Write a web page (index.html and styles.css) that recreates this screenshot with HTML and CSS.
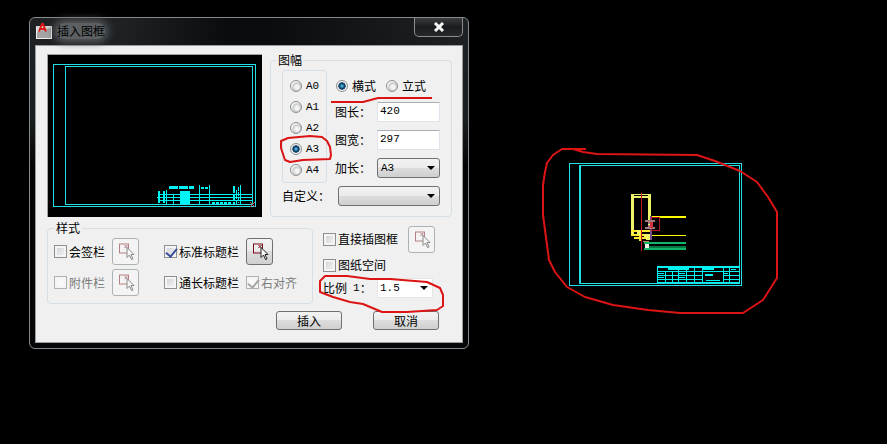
FILE: index.html
```html
<!DOCTYPE html>
<html lang="zh-CN">
<head>
    <meta charset="UTF-8">
    <meta name="viewport" content="width=device-width, initial-scale=1.0">
    <title>插入图框</title>
    <link rel="stylesheet" href="styles.css">
</head>
<body>
    <svg class="symbols" aria-hidden="true">
        <symbol id="pick" viewBox="0 0 25 25">
            <rect x="6.500" y="5" width="9" height="9" fill="none" stroke="#7a0f18"/>
            <path d="M11.500 6l3 3M14.500 6l-3 3" stroke="#7a0f18" fill="none"/>
            <path d="M14 8.500v10l2.500-2.500 2 4.500 1.500-.5-2-4.500h3z" fill="#fff" stroke="#222"/>
        </symbol>
    </svg>

    <main class="canvas">
        <!-- Drawing with the frame already inserted -->
        <svg class="drawing" viewBox="565 160 182 130" shape-rendering="crispEdges" role="img" aria-label="图框">
            <g fill="none" stroke="#22dfe6">
                <rect x="569.5" y="163.500" width="172" height="122"/>
                <path d="M580 165.500h159.500v118H580" />
                <path d="M580 165v119" stroke-width="2"/>
            </g>
            <g fill="none" stroke="#eef36a">
                <path d="M631 194.500h20" />
                <path d="M632.500 194v41M649.500 194v35" stroke-width="3"/>
                <path d="M631 197h20" stroke-width="2"/>
                <path d="M631 230.500h19M631 235h14M634 238h16M640 231v10" stroke="#ffe92e" stroke-width="2"/>
                <path d="M638.500 230v5" stroke-width="3"/>
                <path d="M644 235h7M646 238h5" stroke-width="3"/>
                <path d="M651 217h35" stroke="#ffff00" stroke-width="2"/>
                <path d="M651 235.500h35" stroke="#ffff00"/>
            </g>
            <path d="M644 243h42M644 249h42" stroke="#12b56c" stroke-width="2" fill="none"/>
            <path d="M648 247h38" stroke="#067a45" stroke-width="2" fill="none"/>
            <rect x="645" y="244" width="4" height="4" fill="#f4f4e8"/>
            <path d="M643 241.500h6" stroke="#c98858" fill="none"/>
            <path d="M651 216v24" stroke="#75508a" stroke-width="2" fill="none"/>
            <rect x="651.500" y="217.500" width="8" height="13" fill="none" stroke="#b51420"/>
            <path d="M645 221h10M645 228h10M648 223h5M648 226h5" stroke="#a77c7c" stroke-width="2" fill="none"/>
            <path d="M651 222v6" stroke="#cf3340" stroke-width="3" fill="none"/>
            <path d="M641.500 193v58" stroke="#c81822" fill="none"/>
            <g fill="none" stroke="#00f4f4">
                <path d="M657 267h83" stroke-width="2"/>
                <path d="M668 268.500h21M703 268.500h11" stroke-width="3"/>
                <path d="M657.500 266v18M665.500 272v12M672.500 272v12M678.500 270v14M686.500 270v14M694.500 267v17M702.500 267v17M723.500 267v17M729.500 267v17" />
                <path d="M657 271.500h82M657 275.500h45M657 279.500h45M723 275.500h16M723 279.500h16M706 280.500h14M731 269.500h5M657 282.500h82" />
                <path d="M705 275h8" stroke-width="2"/>
                <path d="M658 273.500h6M679 273.500h6M658 277.500h6M679 277.500h6M724 273.500h4" />
            </g>
        </svg>

        <section class="dialog" role="dialog" aria-labelledby="dialog-title">
            <header class="titlebar">
                <svg class="app-icon" viewBox="0 0 16 17" aria-hidden="true">
                    <rect x="0" y="3" width="16" height="13" fill="#d4d4d4"/>
                    <path d="M0 16V9l8-2 8-3v12z" fill="#a4a4a4"/>
                    <path d="M0 15.500h16M.5 4v12M15.500 4v12" stroke="#efefef" fill="none"/>
                    <path d="M3 8.500L6 1h1l3 7.500M4 6h5" stroke="#e01818" stroke-width="2" fill="none"/>
                </svg>
                <h1 id="dialog-title">插入图框</h1>
                <button type="button" class="close" aria-label="关闭">
                    <svg viewBox="0 0 12 10" aria-hidden="true">
                        <path d="M2 1l8 8M10 1L2 9" stroke="#f4f4f4" stroke-width="3" fill="none"/>
                    </svg>
                </button>
            </header>

            <form class="client">
                <div class="row-top">
                    <svg class="preview" viewBox="48 55 214 162" shape-rendering="crispEdges" role="img" aria-label="预览">
                        <g fill="none" stroke="#22dfe6">
                            <rect x="53.500" y="64.500" width="202" height="142"/>
                            <rect x="65.500" y="66.500" width="187" height="138"/>
                        </g>
                        <g fill="none" stroke="#00f4f4">
                            <path d="M159 194.500h93M157 197.500h95M159 200.500h93"/>
                            <path d="M158.500 191v12M159.500 191v12M163.500 191v12M164.500 191v12M166.500 190v14M173.500 194v10M199.500 185v19M209.500 185v19M240.500 185v19"/>
                            <path d="M169 187.500h25" stroke-width="3" stroke-dasharray="9 1"/>
                            <path d="M201 188h8M212 202.500h20" stroke-width="2" stroke-dasharray="3 1"/>
                            <path d="M234 186v18" stroke-width="2" stroke-dasharray="7 1"/>
                            <path d="M236.500 190v14M238.500 187v16" stroke-dasharray="4 1"/>
                        </g>
                        <rect x="180" y="191" width="10" height="13" fill="#00f4f4"/>
                        <path d="M250 202l5 5M255 202l-5 5" stroke="#c05050" fill="none"/>
                    </svg>

                    <fieldset class="paper">
                        <legend>图幅</legend>
                        <div class="paper-main">
                            <div class="sizes">
                                <label><input type="radio" name="size"><span class="latin">A0</span></label>
                                <label><input type="radio" name="size"><span class="latin">A1</span></label>
                                <label><input type="radio" name="size"><span class="latin">A2</span></label>
                                <label><input type="radio" name="size" checked><span class="latin">A3</span></label>
                                <label><input type="radio" name="size"><span class="latin">A4</span></label>
                            </div>
                            <div class="fields">
                                <div class="orientation">
                                    <label><input type="radio" name="orientation" checked>横式</label>
                                    <label><input type="radio" name="orientation">立式</label>
                                </div>
                                <div class="field">
                                    <label for="length">图长：</label>
                                    <input type="text" id="length" value="420">
                                </div>
                                <div class="field">
                                    <label for="width">图宽：</label>
                                    <input type="text" id="width" value="297">
                                </div>
                                <div class="field">
                                    <label for="extend">加长：</label>
                                    <div class="select"><select id="extend"><option>A3</option></select></div>
                                </div>
                            </div>
                        </div>
                        <div class="field custom">
                            <label for="custom">自定义：</label>
                            <div class="select"><select id="custom"><option></option></select></div>
                        </div>
                    </fieldset>
                </div>

                <div class="row-bottom">
                    <fieldset class="style">
                        <legend>样式</legend>
                        <div class="style-grid">
                            <label><input type="checkbox">会签栏</label>
                            <button type="button" class="pick" aria-label="拾取会签栏" disabled><svg><use href="#pick"/></svg></button>
                            <label><input type="checkbox" checked>标准标题栏</label>
                            <button type="button" class="pick" aria-label="拾取标题栏"><svg><use href="#pick"/></svg></button>
                            <label class="disabled"><input type="checkbox" disabled>附件栏</label>
                            <button type="button" class="pick" aria-label="拾取附件栏" disabled><svg><use href="#pick"/></svg></button>
                            <label><input type="checkbox">通长标题栏</label>
                            <label class="disabled"><input type="checkbox" checked disabled>右对齐</label>
                        </div>
                    </fieldset>

                    <div class="options">
                        <div class="option">
                            <label><input type="checkbox">直接插图框</label>
                            <button type="button" class="pick" aria-label="拾取图框" disabled><svg><use href="#pick"/></svg></button>
                        </div>
                        <div class="option">
                            <label><input type="checkbox">图纸空间</label>
                        </div>
                        <div class="option scale">
                            <label for="scale">比例 <span class="latin">1</span>：</label>
                            <div class="select plain"><select id="scale"><option>1.5</option></select></div>
                        </div>
                    </div>
                </div>

                <div class="actions">
                    <button type="submit">插入</button>
                    <button type="button">取消</button>
                </div>
            </form>
        </section>

        <!-- Red pen marks over the dialog and the drawing -->
        <svg class="marks" viewBox="0 0 887 444" aria-hidden="true">
            <path d="M331 102h32l15-4h54"/>
            <path d="M310 136L288 138 281 141 281 148 285 160 290 162 303 160 330 159 331 155 330 147 327 141 322 137z"/>
            <path d="M320 292V281L325 276H347L370 279H390L427 282 440 288 443 295V306L437 310 407 312H382L363 304 350 302 333 297z"/>
            <path d="M586 149H562L553 155 547 163 545 172 543 185V215L549 260 555 272 567 287 585 297 613 305 648 310 680 313H743L763 300 777 278V212L768 197 757 182 740 171 715 161 697 155 597 154 583 152 573 149"/>
        </svg>
    </main>
</body>
</html>
```

FILE: styles.css
```css
* {
    box-sizing: border-box;
}
body {
    margin: 0;
    background-color: #000;
    color: #000;
    font-family: "Noto Sans CJK SC", sans-serif;
    font-size: 12px;
    line-height: 16px;
}
button, input, select {
    margin: 0;
    font: inherit;
    color: inherit;
}
.symbols {
    display: none;
}
.canvas {
    position: relative;
    min-height: 100vh;
    overflow: hidden;
}
.drawing {
    position: absolute;
    left: 565px;
    top: 160px;
    width: 182px;
    height: 130px;
}
.marks {
    position: absolute;
    left: 0;
    top: 0;
    width: 887px;
    height: 444px;
    fill: none;
    stroke: #dc1414;
    stroke-width: 2;
    stroke-linejoin: round;
    pointer-events: none;
}

/* dialog window */
.dialog {
    position: absolute;
    left: 29px;
    top: 17px;
    width: 440px;
    padding: 0 5px 5px;
    border: 1px solid #858a8c;
    border-radius: 6px;
    background: linear-gradient(#1f2224, #1b1e20 30%, #030405 45%, #050607);
}
.titlebar {
    display: flex;
    align-items: flex-start;
    height: 27px;
    background: linear-gradient(90deg, transparent 20%, #0a0d0f 45%, #0a0d0f 55%, transparent);
}
.app-icon {
    width: 16px;
    height: 17px;
    margin: 5px 0 0 1px;
}
.titlebar h1 {
    margin: 5px 0 0 5px;
    font-size: 12px;
    font-weight: normal;
    line-height: 16px;
    background-color: #5c6063;
    border-radius: 8px;
    box-shadow: 0 0 8px 3px #5c6063;
}
.close {
    width: 49px;
    height: 19px;
    margin-left: auto;
    padding: 0;
    border: 1px solid #898d90;
    border-top: none;
    border-radius: 0 0 5px 5px;
    background: linear-gradient(#3a3d40, #191c1e 50%, #26292b);
}
.close svg {
    display: block;
    width: 12px;
    height: 10px;
    margin: 0 auto;
}
.client {
    padding: 6px 10px 12px 11px;
    border: 1px solid #9a9d9f;
    background-color: #f0f0f0;
}

/* groups */
fieldset {
    min-width: 0;
    margin: 0;
    border: 1px solid #d5dfe5;
    border-radius: 4px;
}
legend {
    margin: 0;
    padding: 0 2px;
}
.row-top {
    display: flex;
    gap: 8px;
}
.preview {
    width: 215px;
    height: 163px;
    margin-top: 2px;
    border: 1px solid #a0a0a0;
    border-width: 1px 0 0 1px;
    background-color: #000;
}
.paper {
    flex: 1;
    padding: 2px 11px 10px;
}
.paper legend {
    margin-left: -6px;
}
.paper-main {
    display: flex;
    align-items: flex-start;
    gap: 8px;
    margin-bottom: 3px;
}
label {
    display: flex;
    align-items: center;
    white-space: nowrap;
}
.latin {
    font-family: "Liberation Mono", monospace;
    font-size: 11px;
}
.sizes {
    width: 45px;
    padding: 4px 0 2px 7px;
    border: 1px solid #d5dfe5;
    border-radius: 3px;
}
.sizes label {
    height: 21px;
}
.fields {
    display: flex;
    flex: 1;
    flex-direction: column;
    gap: 8px;
    min-width: 0;
}
.orientation {
    display: flex;
    gap: 10px;
    height: 24px;
    padding: 8px 0 0 1px;
}
.field {
    display: flex;
    align-items: center;
    height: 20px;
}
.field label {
    width: 42px;
}
.field.custom label {
    width: 56px;
}
input[type="text"] {
    flex: 1;
    min-width: 0;
    height: 20px;
    padding: 0 2px 2px;
    border: 1px solid #e2e3ea;
    border-top-color: #abadb3;
    background-color: #fff;
    font-family: "Liberation Mono", monospace;
    font-size: 11px;
}

/* drop-downs */
.select {
    position: relative;
    flex: 1;
}
.select::after {
    content: "";
    position: absolute;
    right: 5px;
    top: 8px;
    border: 4px solid transparent;
    border-top-color: #000;
    border-bottom: none;
    pointer-events: none;
}
select {
    display: block;
    width: 100%;
    height: 20px;
    padding: 0 3px;
    appearance: none;
    border: 1px solid #707070;
    border-radius: 3px;
    background: linear-gradient(#f2f2f2, #ebebeb 50%, #dddddd 50%, #cfcfcf);
    font-family: "Liberation Mono", monospace;
    font-size: 11px;
}
.plain select {
    border: 1px solid #e6e6e6;
    border-radius: 0;
    background: #fff;
    padding: 0 2px;
}

/* radios and tick boxes */
input[type="radio"] {
    flex: none;
    width: 12px;
    height: 12px;
    margin-right: 4px;
    appearance: none;
    border: 1px solid #8e8f8f;
    border-radius: 50%;
    background: radial-gradient(circle at 60% 60%, #f4f4f4 20%, #c4c8cb 50%, #f4f4f4 60%);
}
input[type="radio"]:checked {
    background: radial-gradient(circle at 50% 50%, #49b4dc 8%, #12436f 35%, #12365a 48%, #eef2f4 56%);
}
input[type="checkbox"] {
    position: relative;
    flex: none;
    width: 13px;
    height: 13px;
    margin-right: 2px;
    appearance: none;
    border: 1px solid #8e8f8f;
    background: linear-gradient(135deg, #cbcfd5, #f6f6f6);
    box-shadow: inset 0 0 0 2px #f4f4f4;
}
input[type="checkbox"]:checked::after {
    content: "";
    position: absolute;
    left: 3px;
    top: 0;
    width: 5px;
    height: 9px;
    border: solid #3a4f97;
    border-width: 0 2px 2px 0;
    transform: rotate(40deg);
}
input[type="checkbox"]:disabled {
    border-color: #b1b1b1;
    background: #f8f8f8;
}
input[type="checkbox"]:disabled::after {
    border-color: #a6a6a6;
}
.disabled {
    color: #7b7b7b;
}

/* lower half */
.row-bottom {
    display: flex;
    gap: 10px;
    margin-top: 3px;
}
.style {
    width: 266px;
    padding: 2px 6px 7px;
}
.style-grid {
    display: grid;
    grid-template-columns: 58px 52px 82px auto;
    grid-auto-rows: 27px;
    row-gap: 4px;
    justify-content: start;
}
.pick {
    display: block;
    width: 27px;
    height: 27px;
    padding: 0;
    border: 1px solid #707070;
    border-radius: 3px;
    background: linear-gradient(#f2f2f2, #ebebeb 50%, #dddddd 50%, #cfcfcf);
}
.pick svg {
    display: block;
    width: 25px;
    height: 25px;
}
.pick:disabled {
    border-color: #adb2b5;
    background: #f4f4f4;
}
.pick:disabled svg {
    opacity: 0.5;
}
.options {
    flex: 1;
    padding-top: 6px;
}
.option {
    display: flex;
    align-items: center;
    gap: 10px;
    height: 26px;
}
.option.scale {
    gap: 0;
    height: 20px;
}
.scale label {
    width: 54px;
}
.scale .latin {
    margin-left: 6px;
}
.plain {
    flex: none;
    width: 56px;
}
.actions {
    display: flex;
    justify-content: flex-end;
    gap: 31px;
    margin: 7px 13px 0 0;
}
.actions button {
    width: 66px;
    height: 19px;
    padding: 0;
    border: 1px solid #707070;
    border-radius: 3px;
    background: linear-gradient(#f2f2f2, #ebebeb 50%, #dddddd 50%, #cfcfcf);
    line-height: 16px;
}
```
